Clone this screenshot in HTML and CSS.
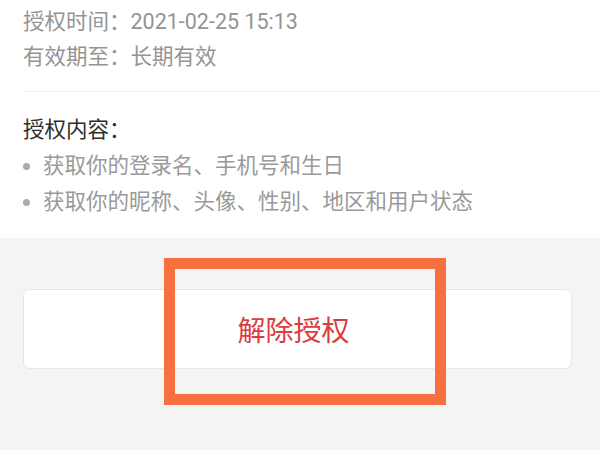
FILE: index.html
```html
<!DOCTYPE html>
<html lang="zh-CN">
<head>
<meta charset="utf-8">
<title>授权管理</title>
<link rel="stylesheet" href="styles.css">
</head>
<body>
  <section class="info">
    <div class="meta">
      <p class="meta-line">授权时间：2021-02-25 15:13</p>
      <p class="meta-line">有效期至：长期有效</p>
    </div>
    <div class="scope">
      <h2 class="scope-title">授权内容：</h2>
      <ul class="scope-list">
        <li class="scope-item">获取你的登录名、手机号和生日</li>
        <li class="scope-item">获取你的昵称、头像、性别、地区和用户状态</li>
      </ul>
    </div>
  </section>
  <section class="actions">
    <div class="revoke-wrap">
      <button class="revoke" type="button">解除授权</button>
      <span class="highlight"></span>
    </div>
  </section>
</body>
</html>
```

FILE: styles.css
```css
html, body {
  margin: 0;
  padding: 0;
}

body {
  width: 600px;
  height: 450px;
  overflow: hidden;
  background: #f4f4f4;
  font-family: Roboto, "Noto Sans CJK SC", sans-serif;
  font-size: 21.5px;
}

.info {
  background: #ffffff;
  padding-left: 23px;
}

.meta {
  padding-top: 4px;
  padding-bottom: 17px;
  border-bottom: 1px solid #f0f0f0;
}

.meta-line {
  margin: 0;
  line-height: 35px;
  color: #949494;
}

.scope {
  padding-top: 20px;
  padding-bottom: 18px;
}

.scope-title {
  margin: 0;
  font-size: 21.5px;
  font-weight: normal;
  line-height: 36px;
  color: #2e2e2e;
}

.scope-list {
  list-style: none;
  margin: 0;
  padding: 0;
}

.scope-item {
  display: flex;
  align-items: center;
  gap: 13px;
  line-height: 36px;
  color: #9a9a9a;
}

.scope-item::before {
  content: "";
  width: 7px;
  height: 7px;
  border-radius: 50%;
  background: #ababab;
  flex: none;
}

.actions {
  padding: 51px 28px 0 23px;
}

.revoke-wrap {
  position: relative;
}

.revoke {
  display: block;
  width: 100%;
  height: 80px;
  background: #ffffff;
  border: 1px solid #e6e6e6;
  border-radius: 7px;
  font-family: Roboto, "Noto Sans CJK SC", sans-serif;
  font-size: 28px;
  color: #dc3b40;
  padding: 0 8px 0 0;
}

/* orange callout frame drawn over the button */
.highlight {
  position: absolute;
  left: 141px;
  top: -31px;
  width: 260px;
  height: 125px;
  border: 11px solid #f7703f;
  pointer-events: none;
}
```
